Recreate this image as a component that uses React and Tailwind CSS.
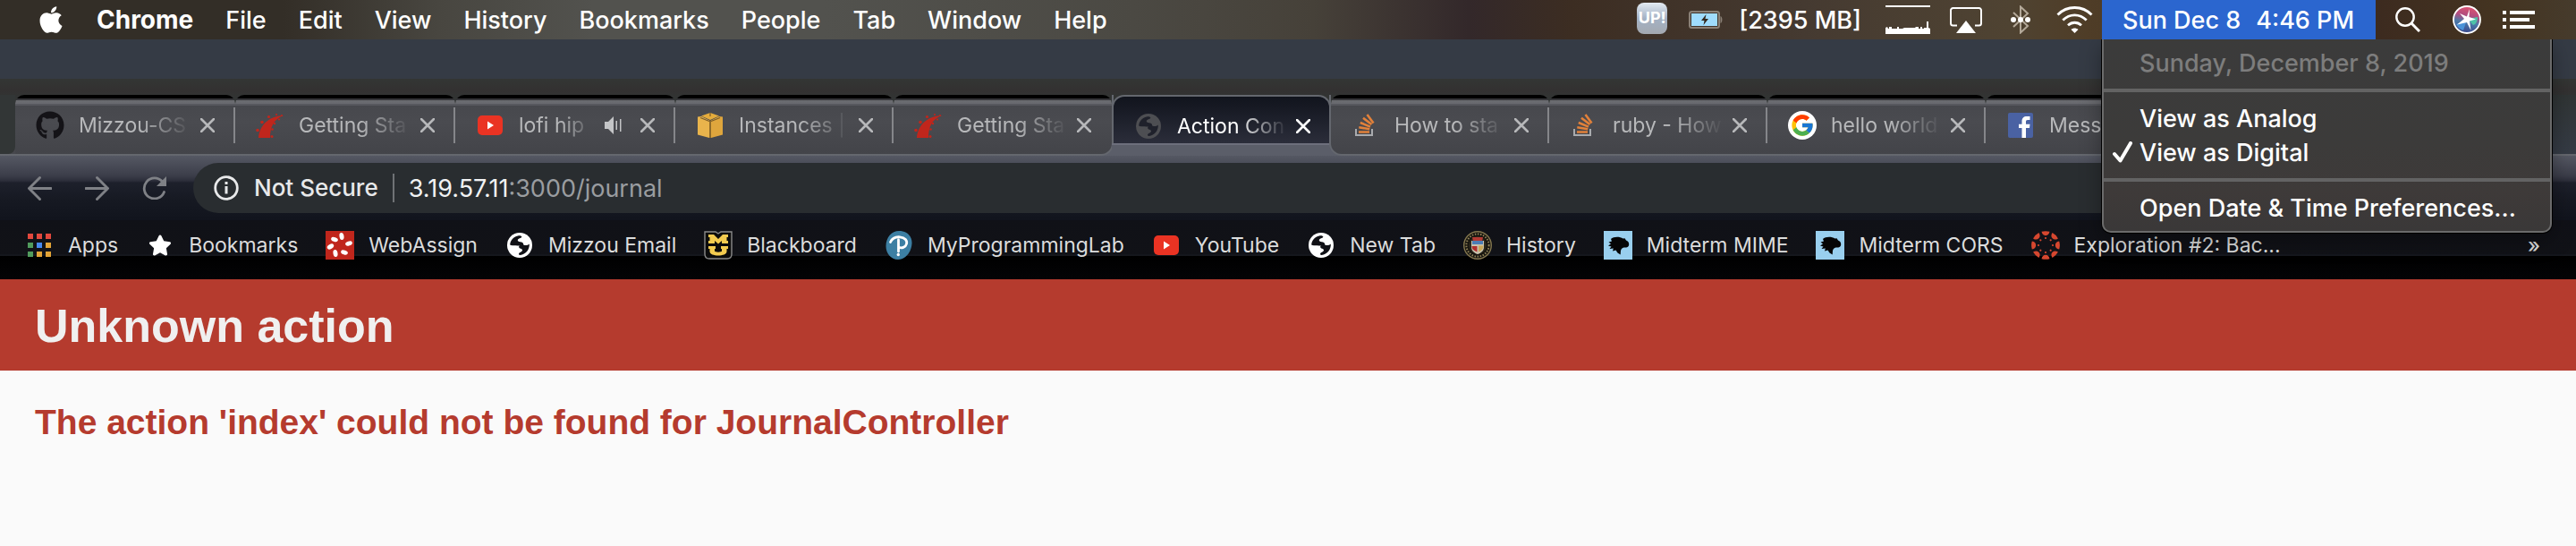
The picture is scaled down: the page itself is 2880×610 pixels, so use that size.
import { FaApple, FaGithub, FaStar } from "react-icons/fa";
import { FcGoogle } from "react-icons/fc";

/* ---------- favicons ---------- */

function Rails() {
  return (
    <svg viewBox="0 0 32 32" className="size-8" fill="#c0261c" aria-hidden="true">
      <path d="M3 30C4 17 13 6 31 5C20 9 16 18 16 30Z" />
      <circle cx="2" cy="21.5" r="1.8" />
      <circle cx="7" cy="12.5" r="1.8" />
      <circle cx="14.5" cy="6.5" r="1.6" />
      <circle cx="23" cy="4" r="1.1" />
      <circle cx="29" cy="5" r="1" />
      <circle cx="26" cy="9.5" r="1.1" />
      <circle cx="21" cy="14" r="1.2" />
      <circle cx="18.5" cy="20.5" r="1.3" />
      <circle cx="18" cy="28.5" r="1.5" />
    </svg>
  );
}

function YouTube() {
  return (
    <svg viewBox="0 0 28 22" className="w-7" aria-hidden="true">
      <rect width="28" height="22" rx="5" fill="#ea3323" />
      <path d="M11 6.5L18 11L11 15.5Z" fill="#fff" />
    </svg>
  );
}

function Aws() {
  return (
    <svg viewBox="0 0 28 28" className="size-7" aria-hidden="true">
      <path d="M14 0L24 3.5L14 8L4 3.5Z" fill="#e5ac3c" />
      <path d="M0 4.5L4 4L13 8.5V28L0 24.5Z" fill="#e9b44c" />
      <path d="M28 4.5L24 4L15 8.5V28L28 24.5Z" fill="#dfa63d" />
      <path d="M13 8.5H15V28H13Z" fill="#8f6b2a" />
      <path d="M3 5.5L13 9.5M25 5.5L15 9.5M14 0V4" stroke="#7a5c28" strokeWidth="1.2" fill="none" />
    </svg>
  );
}

function Globe({ dim }) {
  return (
    <svg viewBox="0 0 28 28" className="size-7" aria-hidden="true">
      <circle cx="14" cy="14" r="14" fill={dim ? "#4d4e52" : "#ffffff"} />
      <g fill={dim ? "#1f212b" : "#101116"}>
        <path d="M3.2 13.5C3.4 8.5 7.2 4.3 12 3.4C14 3 16.5 3.5 16.3 4.8C16 6.2 13.6 5.8 12.3 7.2C11 8.6 12.5 10 14.5 10.2C17 10.5 18.5 11.5 18 13C17 15 13 14.5 9.5 14.3C7 14.2 4.5 14.5 3.2 13.5Z" />
        <path d="M17.5 12.5C19 14.5 22.5 14.5 24.8 12.5C25.3 18.5 21 24.2 14.5 24.9C13 25 12.6 23.6 13.4 22.8C14.5 21.7 16.5 21.5 17 19.8C17.3 18.3 15.6 17.9 14.3 17.4C12.8 16.8 12.8 14.8 14.2 14Z" />
      </g>
    </svg>
  );
}

function StackOverflow() {
  return (
    <svg viewBox="0 0 32 32" className="size-8" fill="none" aria-hidden="true">
      <path d="M5 20V27H23V20" stroke="#a9abae" strokeWidth="2" />
      <g stroke="#e2813a" strokeWidth="2.6">
        <path d="M8 23.5H20" />
        <path d="M8.3 18.2L20.2 20.3" />
        <path d="M9.8 13L21 17.6" />
        <path d="M13 7.8L22.5 15" />
        <path d="M17.5 4L24.5 13.5" />
      </g>
    </svg>
  );
}

function GoogleBadge() {
  return (
    <span className="flex size-8 items-center justify-center rounded-full bg-white">
      <FcGoogle className="size-7" />
    </span>
  );
}

function Facebook() {
  return (
    <svg viewBox="0 0 28 28" className="size-7" aria-hidden="true">
      <rect width="28" height="28" rx="2" fill="#4a62a3" />
      <path d="M15.5 28V17H12V12.7H15.5V9.5C15.5 6 17.5 4 21 4H24.5V8H22C20.5 8 20 8.8 20 10V12.7H24.5L24 17H20V28Z" fill="#fff" />
    </svg>
  );
}

function AppsGrid() {
  const rows = [
    ["#e2483d", "#e2483d", "#e2483d"],
    ["#519b5d", "#4688ee", "#e2a336"],
    ["#519b5d", "#e2a336", "#e2a336"],
  ];
  return (
    <svg viewBox="0 0 26 26" className="w-[26px]" aria-hidden="true">
      {rows.map((row, y) =>
        row.map((c, x) => <rect key={`${x}${y}`} x={x * 10} y={y * 10} width="6" height="6" fill={c} />)
      )}
    </svg>
  );
}

function WebAssign() {
  const spots = [[18, 6, 80], [26, 14, 160], [21, 24, 20], [11, 25, 80], [5.5, 17.5, 150], [10, 9.5, 20]];
  return (
    <svg viewBox="0 0 32 32" className="size-8" aria-hidden="true">
      <rect width="32" height="32" fill="#c0261c" />
      {spots.map(([x, y, a]) => (
        <ellipse key={x} cx={x} cy={y} rx="4" ry="2.5" fill="#fff" transform={`rotate(${a} ${x} ${y})`} />
      ))}
    </svg>
  );
}

function MizzouShield() {
  return (
    <svg viewBox="0 0 32 32" className="size-8" aria-hidden="true">
      <path d="M1 1H13L16 3L19 1H31V26C31 29 29 31 26 31H6C3 31 1 29 1 26Z" fill="#0b0b0b" stroke="#8b8b8b" strokeWidth="1.4" />
      <path d="M5 4H11L16 9L21 4H27V7H25.5V11H27V14H20V11L16 14.5L12 11V14H5V11H6.5V7H5Z" fill="#f3cb4f" />
      <path d="M5 17H13V20H12V22.5C12 24 20 24 20 22.5V20H19V17H27V20H25.5V23C25.5 29 6.5 29 6.5 23V20H5Z" fill="#f3cb4f" />
    </svg>
  );
}

function Pearson() {
  return (
    <svg viewBox="0 0 32 32" className="size-8" aria-hidden="true">
      <path d="M16 0C25 0 31 6 30.5 14C30 24 23 32 15 32C7 32 1.5 25 1.5 17C1.5 7 8 0 16 0Z" fill="#3c7fa3" />
      <path d="M6.5 12.5C8.5 8 13 6.5 17 6.8C23 7.2 25.5 11 24.5 14.5C23.5 18.5 19 19.5 16 18.3M15.5 10V23" stroke="#fff" strokeWidth="2.8" fill="none" strokeLinecap="round" />
      <circle cx="15.3" cy="26.5" r="1.7" fill="#fff" />
    </svg>
  );
}

function Seal() {
  return (
    <svg viewBox="0 0 32 32" className="size-8" aria-hidden="true">
      <circle cx="16" cy="16" r="15.3" fill="#17150f" stroke="#84774f" strokeWidth="1.4" />
      <circle cx="16" cy="16" r="12.6" fill="none" stroke="#8f8158" strokeWidth="2" strokeDasharray="1.5 1.6" />
      <circle cx="16" cy="16" r="10" fill="#2c281c" />
      <path d="M10 7H22L21 12H11Z" fill="#b43a34" />
      <path d="M9 11H23V18C23 22 20 24.5 16 26C12 24.5 9 22 9 18Z" fill="#c9c3ae" />
      <path d="M10 11H22V15H10Z" fill="#4c7db5" />
      <path d="M9.5 17H15.5V23.5C12 22 9.5 20.5 9.5 17Z" fill="#b02f2c" />
      <path d="M17 16.5H22.5C22.5 20 20 22.5 17 23.5Z" fill="#c8a85a" />
    </svg>
  );
}

function TigerHead() {
  return (
    <svg viewBox="0 0 32 32" className="size-8" aria-hidden="true">
      <rect width="32" height="32" fill="#99cfee" />
      <path d="M8 9C11 6 18 6 21.5 8.5L23.5 8.2L25 10.5C27 11 28.5 13 28.2 15.5C28 18.5 24.5 18.8 22.5 18.5C20.5 19 19.5 20 19 22L18.7 26.5L15.5 24.5L13.500 21.5L10 22.5L10.8 19.5L6.5 20L8.5 17.5L5 16.5L8 14.5L5.5 12.5L9 11.5Z" fill="#050505" />
    </svg>
  );
}

function Canvas() {
  const angles = [0, 45, 90, 135, 180, 225, 270, 315];
  return (
    <svg viewBox="0 0 32 32" className="size-8" fill="#d6472f" aria-hidden="true">
      {angles.map((a) => (
        <g key={a} transform={`rotate(${a} 16 16)`}>
          <path d="M11.5 0.8A16 16 0 0 1 20.5 0.8C20 3.6 18.3 5.2 16 5.2S12 3.6 11.5 0.8Z" />
          <circle cx="16" cy="8" r="1.1" />
        </g>
      ))}
    </svg>
  );
}

/* ---------- macOS menu bar ---------- */

const menus = ["File", "Edit", "View", "History", "Bookmarks", "People", "Tab", "Window", "Help"];

function BatteryIcon() {
  return (
    <svg viewBox="0 0 38 20" className="w-[38px]" aria-hidden="true">
      <rect x="1" y="1" width="33" height="18" rx="2.5" fill="none" stroke="#8a8076" strokeWidth="2" />
      <path d="M35.5 6C38 6.5 38 13.5 35.5 14Z" fill="#8a8076" />
      <rect x="3" y="3" width="29" height="14" fill="#9fdcfd" />
      <path d="M19.5 4L14 11H17.5L16.5 16L22 9H18.5Z" fill="#33291f" />
    </svg>
  );
}

function LoadGraph() {
  return (
    <svg viewBox="0 0 50 32" className="w-[50px]" fill="#fff" aria-hidden="true">
      <rect width="50" height="2" />
      <path d="M0 32V25L2 24L3 26H4V24H7V26L13 26V24H15V26H19L21 25H33L34 24H37V26H39V24H41V26H43V25H46V18H48V25L50 26V32Z" />
    </svg>
  );
}

function AirPlay() {
  return (
    <svg viewBox="0 0 36 29" className="w-9" aria-hidden="true">
      <path d="M8 20.5H3.5A2.5 2.5 0 0 1 1 18V3.5A2.5 2.5 0 0 1 3.5 1H32.5A2.5 2.5 0 0 1 35 3.5V18A2.5 2.5 0 0 1 32.5 20.5H28" fill="none" stroke="#fff" strokeWidth="2" />
      <path d="M18 15L29 29H7Z" fill="#fff" />
    </svg>
  );
}

function Bluetooth() {
  return (
    <svg viewBox="0 0 22 32" className="w-[22px]" aria-hidden="true">
      <path d="M3 8L19 23L11 30.5V1.5L19 9L3 24" fill="none" stroke="#b4a999" strokeWidth="2" />
      <g fill="#fff">
        <circle cx="3" cy="16" r="3" />
        <circle cx="11" cy="16" r="3" />
        <circle cx="19" cy="16" r="3" />
      </g>
    </svg>
  );
}

function Wifi() {
  return (
    <svg viewBox="0 0 41 30" className="w-[41px]" fill="none" stroke="#fff" strokeWidth="2.8" aria-hidden="true">
      <path d="M1.5 9.5C12 -1.2 29 -1.2 39.5 9.5" />
      <path d="M7.3 15.5C15 8 26 8 33.7 15.5" />
      <path d="M13 21.3C17.5 17.2 23.5 17.2 28 21.3" />
      <path d="M20.5 30L16.5 26C18.8 24 22.2 24 24.5 26Z" fill="#fff" stroke="none" />
    </svg>
  );
}

function Siri() {
  return (
    <svg viewBox="0 0 32 32" className="size-8" aria-hidden="true">
      <defs>
        <linearGradient id="siri" x1="0.6" y1="0" x2="0.4" y2="1">
          <stop offset="0" stopColor="#e0526e" />
          <stop offset="0.35" stopColor="#b04d80" />
          <stop offset="0.6" stopColor="#4c7aa8" />
          <stop offset="1" stopColor="#38448a" />
        </linearGradient>
      </defs>
      <circle cx="16" cy="16" r="15" fill="url(#siri)" stroke="#fff" strokeWidth="1.8" />
      <path d="M17 15L28 13C28 18 26 21 23 22Z" fill="#4dc2a8" />
      <path d="M16 16L4 21C6 25 9 27 12 28Z" fill="#4a93d8" />
      <path d="M16 12.5L19 4L18.5 13L26 15.5L19 17.5L20.5 28L16 19L5 21.5L13 15L8 9Z" fill="#fff" />
    </svg>
  );
}

function MenuBar() {
  return (
    <header className="flex h-11 items-center justify-between bg-[linear-gradient(90deg,#332e27_0%,#332e27_11%,#484640_17%,#52524e_23%,#52524e_32%,#4b4943_44%,#464139_51%,#33282a_57%,#3c2d22_61%,#453a31_70%,#4f4332_78%,#4f3d27_81%,#3c2a1f_92%,#443421_97%,#463b2c_100%)] text-[27px] font-medium text-white">
      <nav className="flex items-center gap-9 pl-[42px]">
        <button aria-label="Apple menu" className="flex w-[30px] justify-center">
          <FaApple className="size-[34px] shrink-0" />
        </button>
        <button className="text-[28px] font-bold">Chrome</button>
        {menus.map((m) => (
          <button key={m}>{m}</button>
        ))}
      </nav>
      <div className="flex h-full items-center">
        <button aria-label="Up" className="mb-1 flex h-[35px] w-[34px] items-center justify-center rounded-lg bg-linear-to-b from-[#e4ebf2] via-[#a3b1c4] to-[#a4a9b0] text-[18px] font-bold text-white">
          UP!
        </button>
        <button aria-label="Battery" className="ml-6"><BatteryIcon /></button>
        <span className="ml-[18px]">[2395 MB]</span>
        <button aria-label="CPU load" className="ml-[27px]"><LoadGraph /></button>
        <button aria-label="AirPlay" className="ml-[22px]"><AirPlay /></button>
        <button aria-label="Bluetooth" className="ml-8"><Bluetooth /></button>
        <button aria-label="Wi-Fi" className="ml-[29px]"><Wifi /></button>
        <div className="relative ml-[10px] h-full">
          <button className="flex h-full w-[306px] items-center gap-[17px] bg-[#2b66cf] pl-[23px]">
            <span>Sun Dec 8</span>
            <span>4:46 PM</span>
          </button>
          <ClockMenu />
        </div>
        <button aria-label="Search" className="ml-[22px]">
          <svg viewBox="0 0 28 28" className="w-7" fill="none" stroke="#fff" aria-hidden="true">
            <circle cx="11" cy="11" r="9.7" strokeWidth="2.4" />
            <path d="M18 18L27 27" strokeWidth="3" />
          </svg>
        </button>
        <button aria-label="Siri" className="ml-9"><Siri /></button>
        <button aria-label="Notification Center" className="mr-[46px] ml-6">
          <svg viewBox="0 0 36 20" className="w-9" fill="#fff" aria-hidden="true">
            <path d="M0 0H4V4H0ZM8 0H36V4H8ZM0 8H4V12H0ZM8 8H30V12H8ZM0 16H4V20H0ZM8 16H36V20H8Z" />
          </svg>
        </button>
      </div>
    </header>
  );
}

function ClockMenu() {
  const item = "flex h-[38px] w-full items-center pl-10 text-left";
  const line = "my-[10px] h-1 border-0 bg-[#636363]";
  return (
    <div className="absolute top-full left-0 z-10 w-[503px] rounded-b-[10px] border-x-2 border-b-2 border-[#6b6b6b] bg-[linear-gradient(180deg,#3b3b3b,#3c3b3a_55%,#3e3a39_80%,#3a3838)] pt-[7px] pb-[7px] whitespace-nowrap shadow-[0_0_0_1px_#000,0_8px_24px_rgba(0,0,0,0.35)] [clip-path:inset(0_-40px_-40px_-40px)]">
      <button disabled className={item + " text-[#7d7d7d]"}>Sunday, December 8, 2019</button>
      <hr className={line} />
      <button className={item}>View as Analog</button>
      <button className="relative flex h-[38px] w-full items-center pl-10 text-left">
        <svg viewBox="0 0 22 24" className="absolute left-[10px] w-[22px]" aria-hidden="true">
          <path d="M2 14L8.5 21.5L20 2" fill="none" stroke="#fff" strokeWidth="4" strokeLinecap="round" strokeLinejoin="round" />
        </svg>
        View as Digital
      </button>
      <hr className={line} />
      <button className={item}>Open Date &amp; Time Preferences...</button>
    </div>
  );
}

/* ---------- browser tabs ---------- */

const leftTabs = [
  { title: "Mizzou-CS", icon: <FaGithub className="size-8 text-[#141317]" />, wide: true },
  { title: "Getting Sta", icon: <Rails />, wide: true },
  { title: "lofi hip", icon: <YouTube />, audio: true, wide: true },
  { title: "Instances |", icon: <Aws /> },
  { title: "Getting Sta", icon: <Rails />, last: true },
];
const rightTabs = [
  { title: "How to sta", icon: <StackOverflow /> },
  { title: "ruby - How", icon: <StackOverflow /> },
  { title: "hello world", icon: <GoogleBadge /> },
  { title: "Mess", icon: <Facebook />, last: true },
];

function TabContent({ title, icon, audio }) {
  return (
    <>
      <span className="flex w-8 shrink-0 items-center justify-center">{icon}</span>
      <span className="ml-4 flex min-w-0 flex-1 items-center">
        <button
          role="tab"
          className="min-w-0 flex-1 overflow-hidden text-left leading-8 whitespace-nowrap [mask-image:linear-gradient(90deg,#000_55%,transparent_102%)]"
        >
          {title}
        </button>
        {audio && (
          <svg viewBox="0 0 20 20" className="mr-2 ml-3 w-5" fill="#c4c5c7" aria-label="Playing audio">
            <path d="M0 6H4L10 0V20L4 14H0Z" />
            <path d="M12.5 5H14V15H12.5ZM17 3H18.5V17H17Z" />
          </svg>
        )}
      </span>
      <button aria-label={`Close ${title}`} className="ml-3 shrink-0">
        <svg viewBox="0 0 16 16" className="w-4" stroke="currentColor" strokeWidth="2.6" strokeLinecap="round" aria-hidden="true">
          <path d="M1 1L15 15M15 1L1 15" />
        </svg>
      </button>
    </>
  );
}

function Tab({ tab }) {
  return (
    <div
      className={
        "flex shrink-0 items-center rounded-t-[10px] bg-[linear-gradient(180deg,#000_0px,#000_4px,#36363a_4px,#36363a_6px,#6a6b70_6px,#696a6f_10px,#57585e_10px,#57585e_12px,#47484d_12px,#4a4b50_30px,#434449_100%)] pt-0.5 pl-[23px] text-[#b7b8ba] " +
        (tab.wide ? "w-[246px]" : "w-[244px]")
      }
    >
      <TabContent {...tab} />
      <span className={"ml-[21px] h-10 w-0.5 " + (tab.last ? "bg-transparent" : "bg-[#85868a]")} />
    </div>
  );
}

function TabStrip() {
  return (
    <div className="bg-[linear-gradient(180deg,#333634_0px,#333131_12px,#313534_24px,#323636_60px,#5b5e69_70px)] pt-[18px]">
      <div role="tablist" className="flex h-[68px] text-[23px]">
        <div className="flex border-b-2 border-[#64676e] bg-[#47484d]">
          <span className="w-2 bg-[#323636]" />
          <span className="w-[9px] rounded-br-lg bg-[#323636]" />
        </div>
        <div className="-ml-[17px] flex overflow-hidden rounded-br-[14px] border-r-2 border-b-2 border-[#64676e] pl-[17px]">
          {leftTabs.map((t, i) => (
            <Tab key={i} tab={t} />
          ))}
        </div>
        <div className="-mx-0.5 flex w-[245px] flex-col">
          <div className="flex h-[54px] items-center rounded-t-[14px] border-x-2 border-t-2 border-[#64676e] bg-linear-to-b from-[#11141d] to-[#2b2d3a] pt-[13px] pr-[21px] pl-[23px] text-white">
            <TabContent title="Action Con" icon={<Globe dim />} />
          </div>
          <div className="flex-1 border-t-2 border-[#6d6f7c] bg-[#5b5e69]" />
        </div>
        <div className="flex flex-1 overflow-hidden rounded-bl-[14px] border-b-2 border-l-2 border-[#64676e]">
          {rightTabs.map((t, i) => (
            <Tab key={i} tab={t} />
          ))}
          <div className="flex-1 bg-[linear-gradient(180deg,#303535,#353b45)]" />
        </div>
      </div>
    </div>
  );
}

/* ---------- toolbar and bookmarks ---------- */

function Toolbar() {
  return (
    <div className="flex bg-[linear-gradient(180deg,#555863_0px,#3c3e4a_22px,#2c2e3a_28px,#1d202b_30px,#161922_50px,#11141d_72px)] py-2 text-[#7f8186]">
      <div className="flex items-center gap-[37px] pr-[29px] pl-[31px]">
        <button aria-label="Back">
          <svg viewBox="0 0 26 26" className="w-[27px]" fill="none" stroke="currentColor" strokeWidth="2.8" strokeLinecap="round" aria-hidden="true">
            <path d="M13 1.5L1.5 13L13 24.5M1.5 13H25" />
          </svg>
        </button>
        <button aria-label="Forward">
          <svg viewBox="0 0 26 26" className="w-[27px]" fill="none" stroke="currentColor" strokeWidth="2.8" strokeLinecap="round" aria-hidden="true">
            <path d="M13 1.5L24.5 13L13 24.5M24.5 13H1" />
          </svg>
        </button>
        <button aria-label="Reload">
          <svg viewBox="0 0 28 26" className="w-7" fill="none" stroke="currentColor" strokeWidth="2.8" strokeLinecap="round" aria-hidden="true">
            <path d="M22.5 6A11.5 11.5 0 1 0 24.5 17.5" />
            <path d="M27 0V11H16Z" fill="currentColor" stroke="none" />
          </svg>
        </button>
      </div>
      <div className="mr-32 flex h-14 flex-1 items-center rounded-full bg-[#292d30] pl-[23px] text-[#e8e9ea]">
        <button className="flex items-center gap-[17px] text-[26px] font-medium">
          <svg viewBox="0 0 28 28" className="w-7" fill="none" stroke="currentColor" strokeWidth="2.8" aria-hidden="true">
            <circle cx="14" cy="14" r="12.3" />
            <path d="M14 12V20.5M14 7V10" strokeWidth="3" />
          </svg>
          Not Secure
        </button>
        <span className="mx-4 h-8 w-0.5 bg-[#6f7275]" />
        <div role="textbox" aria-label="Address" contentEditable suppressContentEditableWarning className="flex-1 text-[27px] text-[#9a9da0]">
          <span className="text-[#f1f2f3]">3.19.57.11</span>:3000/journal
        </div>
      </div>
    </div>
  );
}

const bookmarks = [
  { label: "Apps", icon: <AppsGrid /> },
  { label: "Bookmarks", icon: <FaStar className="size-[26px] text-white" /> },
  { label: "WebAssign", icon: <WebAssign /> },
  { label: "Mizzou Email", icon: <Globe /> },
  { label: "Blackboard", icon: <MizzouShield /> },
  { label: "MyProgrammingLab", icon: <Pearson /> },
  { label: "YouTube", icon: <YouTube /> },
  { label: "New Tab", icon: <Globe /> },
  { label: "History", icon: <Seal /> },
  { label: "Midterm MIME", icon: <TigerHead /> },
  { label: "Midterm CORS", icon: <TigerHead /> },
  { label: "Exploration #2: Bac...", icon: <Canvas /> },
];

function BookmarksBar() {
  return (
    <nav className="flex h-[66px] items-start justify-between bg-[linear-gradient(180deg,#101117_0px,#111217_38px,#15171d_38px,#15171d_40px,#000_40px,#040406_100%)] pr-10 pl-7 text-[23px] text-[#dcdddd]">
      <ul className="flex h-14 items-center gap-[31px]">
        {bookmarks.map((b) => (
          <li key={b.label}>
            <a href="#" className="flex items-center gap-4 whitespace-nowrap">
              <span className="flex w-8 justify-center">{b.icon}</span>
              {b.label}
            </a>
          </li>
        ))}
      </ul>
      <button aria-label="More bookmarks" className="h-14 font-medium">»</button>
    </nav>
  );
}

export default function App() {
  return (
    <div className="min-h-screen bg-[#fafafa] font-['Inter',sans-serif] leading-none">
      <MenuBar />
      <div className="h-11 bg-[#353b45]" />
      <TabStrip />
      <Toolbar />
      <BookmarksBar />
      <main className="font-['Liberation_Sans',Arial,sans-serif] font-bold">
        <div className="bg-[#b53b2e] px-[39px] pt-[22px] pb-5">
          <h1 className="text-[52px] leading-[60px] text-[#f0f0f0]">Unknown action</h1>
        </div>
        <h2 className="px-[39px] pt-9 text-[39px] leading-11 text-[#b53b2e]">
          The action 'index' could not be found for JournalController
        </h2>
      </main>
    </div>
  );
}
